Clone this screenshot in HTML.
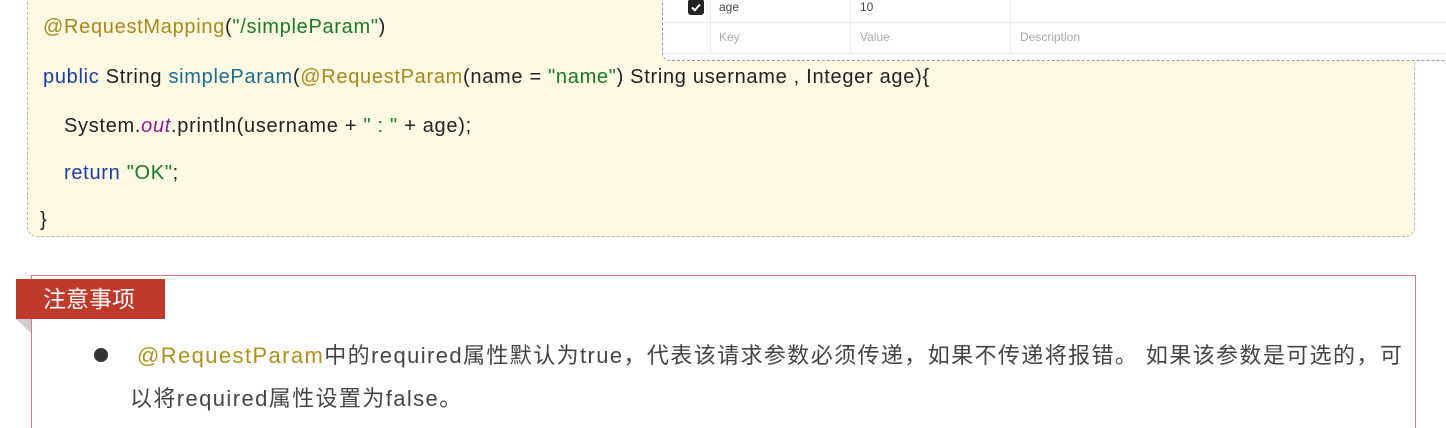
<!DOCTYPE html>
<html><head><meta charset="utf-8"><style>
html,body{margin:0;width:1446px;height:428px;overflow:hidden}
body{background:#fff;position:relative;font-family:"Liberation Sans","Noto Sans CJK SC",sans-serif}
.code{position:absolute;left:27px;top:-20px;width:1386px;height:255px;background:#fdf9e2;border:1px dashed #b8b8b0;border-radius:10px}
.ln{position:absolute;white-space:nowrap;font-size:20px;color:#222;font-family:"Liberation Sans","Noto Sans CJK SC",sans-serif;letter-spacing:0.7px}
.an{color:#a8881c}.st{color:#17792c}.kw{color:#1b3ea6}.fn{color:#1d6b8c}.ou{color:#8e1a98;font-style:italic}
.pop{position:absolute;left:662px;top:-10px;width:782px;height:69px;background:#fff;border:1px dashed #999;border-right:none;border-radius:0 0 0 8px}
.hl{position:absolute;height:1px;background:#ececec}
.vl{position:absolute;width:1px;background:#ececec;top:0;height:53px}
.pt{position:absolute;font-size:12px;white-space:nowrap}
.red{position:absolute;left:31px;top:275px;width:1383px;height:152px;border:1px solid #d08078;border-bottom:none}
.tag{position:absolute;left:16px;top:279px;width:149px;height:40px;background:#bf3a2a;color:#fff;font-size:23px;line-height:40px;text-indent:27px}
.fold{position:absolute;left:16px;top:319px;width:0;height:0;border-top:14px solid #cfcfcf;border-left:15px solid transparent}
.tx{position:absolute;white-space:nowrap;font-size:22px;line-height:30px;color:#444;letter-spacing:1.4px}
</style></head><body>
<div class="code"></div>
<div class="ln" style="left:43px;top:16px"><span class="an">@RequestMapping</span>(<span class="st">"/simpleParam"</span>)</div>
<div class="ln" style="left:43px;top:66px"><span class="kw">public</span> String <span class="fn">simpleParam</span>(<span class="an">@RequestParam</span>(name = <span class="st">"name"</span>) String username , Integer age){</div>
<div class="ln" style="left:64px;top:115px">System.<span class="ou">out</span>.println(username + <span class="st">" : "</span> + age);</div>
<div class="ln" style="left:64px;top:162px"><span class="kw">return</span> <span class="st">"OK"</span>;</div>
<div class="ln" style="left:40px;top:209px">}</div>

<div class="pop"></div>
<div class="hl" style="top:22px;left:663px;width:783px"></div>
<div class="hl" style="top:53px;left:663px;width:783px"></div>
<div class="vl" style="left:710px"></div>
<div class="vl" style="left:850px"></div>
<div class="vl" style="left:1010px"></div>
<div style="position:absolute;left:688px;top:-1px;width:16px;height:16px;background:#222;border-radius:3px"><svg width="16" height="16" viewBox="0 0 16 16"><path d="M4 8.5l2.8 2.7L12 5.5" stroke="#fff" stroke-width="2" fill="none"/></svg></div>
<div class="pt" style="left:719px;top:0px;color:#444">age</div>
<div class="pt" style="left:860px;top:0px;color:#444">10</div>
<div class="pt" style="left:719px;top:30px;color:#aaa">Key</div>
<div class="pt" style="left:860px;top:30px;color:#aaa">Value</div>
<div class="pt" style="left:1020px;top:30px;color:#aaa">Description</div>

<div class="red"></div>
<div class="tag">注意事项</div>
<div class="fold"></div>
<div style="position:absolute;left:94px;top:348px;width:14px;height:14px;border-radius:50%;background:#333"></div>
<div class="tx" style="left:137px;top:341px"><span style="color:#b0901a">@RequestParam</span>中的required属性默认为true，代表该请求参数必须传递，如果不传递将报错。 如果该参数是可选的，可</div>
<div class="tx" style="left:130px;top:384px">以将required属性设置为false。</div>
</body></html>
